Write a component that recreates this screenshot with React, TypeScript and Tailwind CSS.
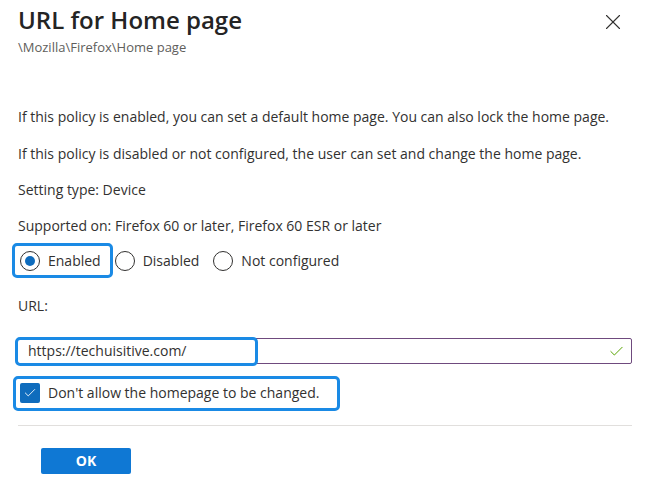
import { X, Check } from 'lucide-react'

const Radio = ({ label, checked }: { label: string; checked?: boolean }) => (
  <label className="flex items-center gap-2">
    <span className="w-5 h-5 rounded-full border border-[#323130] flex items-center justify-center">
      {checked && <span className="w-[10px] h-[10px] rounded-full bg-[#0f6cbd]" />}
    </span>
    <span>{label}</span>
  </label>
)

export default function App() {
  return (
    <div className="w-[648px] h-[486px] bg-white overflow-hidden pl-[18px] pr-4 text-[14px] leading-5 text-[#323130] font-['Open_Sans','Noto_Sans',sans-serif]">
      {/* Header */}
      <div className="flex items-start justify-between">
        <div>
          <h1 className="mt-1 text-[24px] leading-8 font-semibold text-[#242424]">URL for Home page</h1>
          <p className="mt-[2px] text-[13px] leading-[18px] text-[#605e5c]">\Mozilla\Firefox\Home page</p>
        </div>
        <button className="mt-[6px] mr-[3px] w-8 h-8 flex items-center justify-center text-[#323130]">
          <X size={26} strokeWidth={1} />
        </button>
      </div>

      {/* Policy description */}
      <p className="mt-[51px]">
        If this policy is enabled, you can set a default home page. You can also lock the home page.
      </p>
      <p className="mt-[17px]">
        If this policy is disabled or not configured, the user can set and change the home page.
      </p>
      <p className="mt-4">Setting type: Device</p>
      <p className="mt-4">Supported on: Firefox 60 or later, Firefox 60 ESR or later</p>

      {/* State */}
      <div className="mt-2 h-[33px] ml-[2px] flex items-center gap-[14px]">
        <div className="relative">
          <Radio label="Enabled" checked />
          <span className="absolute -left-2 -right-3 -top-[8px] -bottom-[7px] border-[3px] border-[#1a8ae5] rounded-[5px]" />
        </div>
        <Radio label="Disabled" />
        <Radio label="Not configured" />
      </div>

      <p className="mt-[19px]">URL:</p>

      {/* URL input */}
      <div className="relative mt-[22px] -ml-px">
        <div className="h-[26px] border border-[#6f4a7e] rounded-[2px] flex items-center pl-[10px] pr-[6px]">
          <span className="flex-1">https://techuisitive.com/</span>
          <Check size={17} strokeWidth={1.4} className="text-[#57a300]" />
        </div>
        <span className="absolute -left-[2px] -top-px -bottom-[2px] w-[243px] border-[3px] border-[#1a8ae5] rounded-[5px]" />
      </div>

      {/* Lock option */}
      <div className="mt-3 h-[34px] ml-[2px] flex items-center">
        <label className="relative flex items-center gap-2">
          <span className="w-5 h-5 rounded-[2px] bg-[#0f6cbd] flex items-center justify-center">
            <Check size={14} strokeWidth={1.5} className="text-white" />
          </span>
          <span>Don't allow the homepage to be changed.</span>
          <span className="absolute -left-[7px] -right-[21px] -top-[7px] -bottom-[8px] border-[3px] border-[#1a8ae5] rounded-[5px]" />
        </label>
      </div>

      <div className="mt-[15px] h-px bg-[#e1dfdd]" />

      <button className="mt-[22px] ml-[23px] w-[90px] h-[26px] rounded-[2px] bg-[#0f78d4] text-white font-bold text-[14px]">
        OK
      </button>
    </div>
  )
}
